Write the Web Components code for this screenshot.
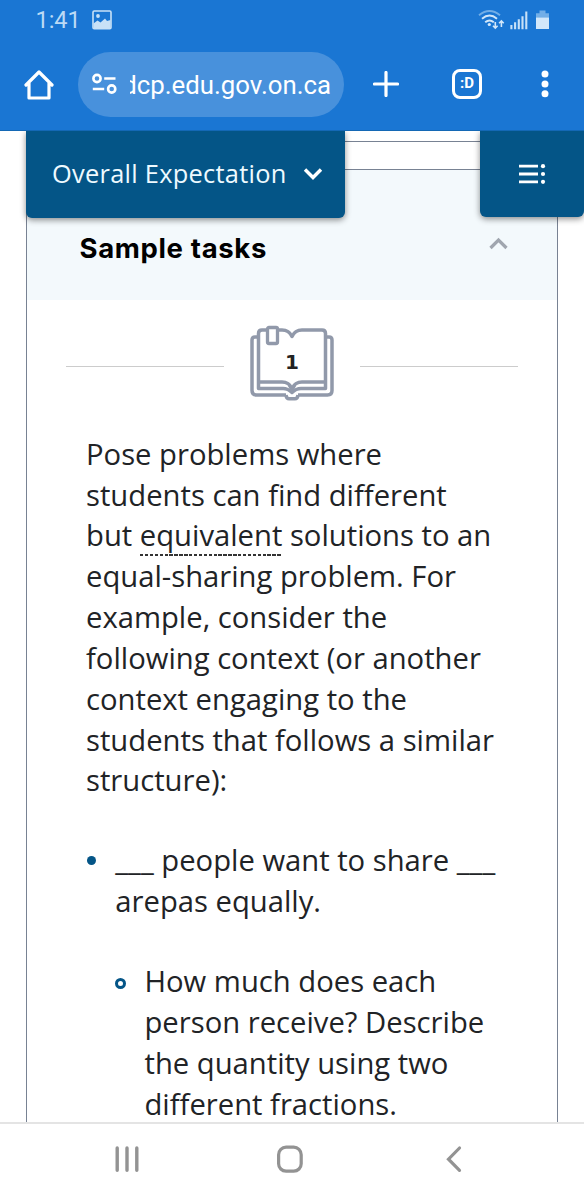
<!DOCTYPE html>
<html lang="en">
<head>
<meta charset="utf-8">
<title>Sample tasks</title>
<style>
html,body{margin:0;height:1200px;overflow:hidden;background:#fff}
body{font-family:"Open Sans","Noto Sans",sans-serif}
</style>
</head>
<body>
<phone-screen>
  <status-bar slot="top">1:41</status-bar>
  <browser-bar slot="top">dcp.edu.gov.on.ca</browser-bar>
  <page-tabs slot="page">Overall Expectation</page-tabs>
  <task-card slot="page">
    <span slot="title">Sample tasks</span>
    <book-divider>1</book-divider>
    <task-copy></task-copy>
  </task-card>
  <nav-bar slot="bottom"></nav-bar>
</phone-screen>
<script>
const define = (name, html) => customElements.define(name, class extends HTMLElement {
  constructor() {
    super();
    const t = document.createElement('template');
    t.innerHTML = html;
    this.attachShadow({mode: 'open'}).appendChild(t.content.cloneNode(true));
  }
});

define('phone-screen', `
<style>
:host{display:flex;flex-direction:column;width:584px;height:1200px;overflow:hidden;background:#fff}
header{height:131px;flex:none;background:#1a76d3;box-shadow:inset 0 -1px #1468b5}
main{height:991px;flex:none;overflow:hidden;position:relative;background:#fff}
</style>
<header><slot name="top"></slot></header>
<main><slot name="page"></slot></main>
<slot name="bottom"></slot>`);

define('status-bar', `
<style>
:host{display:flex;align-items:center;height:40px;box-sizing:border-box;padding:0 34px 0 35.5px;color:#bcdaf5;font:23.6px/40px Roboto,sans-serif;letter-spacing:-.1px}
svg{display:block;flex:none}
.pic{margin-left:11px}
.r{margin-left:auto;display:flex}
</style>
<slot></slot>
<svg class="pic" width="20" height="20" viewBox="0 0 20 20"><rect x="1" y="1" width="18" height="17.6" rx="1.2" fill="none" stroke="#c8e1f7" stroke-width="1.6"/><path d="M1.5 13.5 5.5 10.5 8.5 12.5 13 8.5 15 11 18.5 10V18H1.5Z" fill="#c8e1f7"/><circle cx="6" cy="6" r="1.9" fill="#c8e1f7"/></svg>
<div class="r"><svg width="72" height="20" viewBox="0 0 72 20">
<g fill="none" stroke-width="1.9"><path d="M1 5.2Q11.5-3.2 22 5.2" stroke="#72aee7"/><path d="M4 8.8Q11.5 2.4 19 8.8M7.2 12.3Q11.5 8.6 15.8 12.3" stroke="#d2e7fa"/></g>
<circle cx="11.3" cy="14.5" r="1.6" fill="#d2e7fa"/>
<path d="M17.3 12V18M15 15.8 17.3 18.2 19.6 15.8M23.4 17V11M21.1 13.2 23.4 10.8 25.7 13.2" fill="none" stroke="#d2e7fa" stroke-width="1.6"/>
<path d="M33.4 15V19.3M37.1 12.3V19.3M40.8 9.3V19.3M44.5 6.3V19.3M48.3 1.5V19.3" stroke="#c8e1f7" stroke-width="2.1"/>
<path d="M58 3.2H61.5V.6H67.5V3.2H71V8H58Z" fill="#72aee7"/><path d="M58 7.6H71V19H58Z" fill="#d2e7fa"/></svg></div>`);

define('browser-bar', `
<style>
:host{display:flex;align-items:center;height:65px;padding:12px 33px 0 24px;color:#fff}
svg{display:block;flex:none}
.pill{display:flex;align-items:center;box-sizing:border-box;width:266px;height:65px;margin-left:24px;padding:1px 13px 0 14px;border-radius:33px;background:#4891dc}
.pill svg{margin-top:-1.5px}
.url{margin-left:13px;width:201px;overflow:hidden;display:flex;justify-content:flex-end;font:25.8px/36px Roboto,sans-serif;white-space:nowrap}
.plus{margin-left:29px}.tab{margin-left:53px;width:24px;height:24px;border:3px solid #fff;border-radius:8px;font:bold 15px/23px Roboto,sans-serif;text-align:center}
.plus,.tab,.dots{position:relative;top:-.5px}
.dots{margin-left:59px}
</style>
<svg width="30" height="30" viewBox="0 0 30 30"><path d="M2 15 15 2 28 15M5 13V28H25V13" fill="none" stroke="#fff" stroke-width="3.2" stroke-linejoin="round" stroke-linecap="round"/></svg>
<div class="pill"><svg width="25" height="22" viewBox="0 0 25 22"><g fill="none" stroke="#fff" stroke-width="2.6"><circle cx="5" cy="5.5" r="3.6"/><circle cx="19.7" cy="16" r="3.6"/><path d="M12.2 5.5H23.5M.8 16H12.2"/></g></svg><span class="url"><slot></slot></span></div>
<svg class="plus" width="26" height="26" viewBox="0 0 26 26"><path d="M13 1.5V24.5M1.5 13H24.5" stroke="#fff" stroke-width="3.2" stroke-linecap="round"/></svg>
<div class="tab">:D</div>
<svg class="dots" width="8" height="28" viewBox="0 0 8 28"><g fill="#fff"><circle cx="4" cy="4" r="3.5"/><circle cx="4" cy="14" r="3.5"/><circle cx="4" cy="23.8" r="3.5"/></g></svg>`);

define('page-tabs', `
<style>
:host{position:absolute;z-index:2;left:26px;right:0;top:0;display:flex;justify-content:space-between;align-items:flex-start}
div{display:flex;align-items:center;box-sizing:border-box;height:86.5px;background:#045587;border-radius:0 0 6px 6px;box-shadow:0 2px 6px rgba(0,0,0,.45);color:#eefaff;white-space:nowrap}
.a{width:319px;padding:0 0 2.5px 26px;font-size:25.4px;line-height:36px;letter-spacing:.27px}
.b{width:104px;height:86px;padding-left:39px}
.a svg{margin:1px 0 0 16px}
</style>
<div class="a"><slot></slot><svg width="20" height="14" viewBox="0 0 20 14"><path d="M2 2.5 10 10.5 18 2.5" fill="none" stroke="#fff" stroke-width="3.4"/></svg></div>
<div class="b"><svg width="27" height="20" viewBox="0 0 27 20"><path d="M0 2.2H19M0 10H19M0 17.8H19" stroke="#fff" stroke-width="2.8"/><g fill="#fff"><circle cx="24" cy="2.2" r="2.1"/><circle cx="24" cy="10" r="2.1"/><circle cx="24" cy="17.8" r="2.1"/></g></svg></div>`);

define('task-card', `
<style>
:host{display:block;margin-left:26px;width:532px}
.prev{box-sizing:border-box;height:11px;border:1px solid #788293;border-top:0}
.card{box-sizing:border-box;margin-top:27px;height:1000px;border:1px solid #788293}
.head{display:flex;justify-content:space-between;height:130px;box-sizing:border-box;padding:60px 49px 0 52.5px;background:#f3f9fc;color:#000;font:700 27.5px/36px Inter,sans-serif;letter-spacing:.65px}
svg{margin-top:7px}
</style>
<div class="prev"></div>
<div class="card"><div class="head"><slot name="title"></slot><svg width="19" height="13" viewBox="0 0 19 13"><path d="M1.5 11 9.5 3 17.5 11" fill="none" stroke="#a0a6af" stroke-width="3.2"/></svg></div><slot></slot></div>`);

define('book-divider', `
<style>
:host{display:flex;align-items:center;height:77px;margin:25px 39px 0;color:#222;font:bold 20px "DejaVu Sans",sans-serif}
i{height:1px;flex:1;background:#ccc;margin-top:5px}
.book{display:grid;width:86px;margin:0 25px;place-items:center}
.book>*{grid-area:1/1}
svg{display:block}
.n{line-height:28px;margin-top:-3px}
</style>
<i></i><div class="book"><svg width="86" height="77" viewBox="0 0 86 77"><g fill="none" stroke="#9199aa" stroke-width="3.5" stroke-linejoin="round">
<path d="M9 12H6Q3 12 3 15V65.5Q3 70 7.5 70H37M49 70H78.5Q83 70 83 65.5V15Q83 12 80 12H77"/>
<path d="M37 70Q37.5 73.8 40 73.8H46Q48.5 73.8 49 70"/>
<path d="M18 5H13Q9.5 5 9.5 8.5V63.5H34Q39 63.5 43 67.5Q47 63.5 52 63.5H76.5V8.5Q76.5 5 73 5H53Q46 5 43 11.5Q40 5 33 5H29"/>
<path d="M9 57H33Q40 57 43 63.5Q46 57 53 57H77"/>
<rect x="18.5" y="2.5" width="10" height="16" rx="1.5" fill="#fff" stroke-width="3.3"/></g><path d="M39 61H47L43 69Z" fill="#9199aa"/></svg><span class="n"><slot></slot></span></div><i></i>`);

define('task-copy', `
<style>
:host{display:block;padding:31.8px 0 0 59px;color:#212326;font-size:29.22px;line-height:40.83px;white-space:nowrap}
p,ul{margin:0;padding:0}
li{display:block;position:relative}
u{text-decoration:none;background:repeating-linear-gradient(90deg,#333 0 3.4px,transparent 3.4px 4.9px) 0 100%/100% 2px no-repeat;padding-bottom:1px}
.l1{margin-top:39.2px;padding-left:29.3px}
.l2{margin-top:39.2px}
.l2 li{padding-left:29.2px}
li::before{content:"";position:absolute;left:.5px;top:16px;width:9px;height:9px;border-radius:50%;background:#045587}
.l2 li::before{box-sizing:border-box;left:0;top:17px;width:11px;height:11px;background:#fff;border:3px solid #045587}
</style>
<p>Pose problems where<br>students can find different<br>but <u>equivalent</u> solutions to an<br>equal-sharing problem. For<br>example, consider the<br>following context (or another<br>context engaging to the<br>students that follows a similar<br>structure):</p>
<ul><li class="l1">___ people want to share ___<br>arepas equally.<ul class="l2"><li>How much does each<br>person receive? Describe<br>the quantity using two<br>different fractions.</li></ul></li></ul>`);

define('nav-bar', `
<style>
:host{display:flex;align-items:center;box-sizing:border-box;height:78px;flex:none;border-top:2px solid #e4e4e4;background:#fff;padding:0 0 6px 115px}
svg{display:block}
.h{margin-left:136px}.k{margin-left:142px}
</style>
<svg width="25" height="30" viewBox="0 0 25 30"><path d="M2.2 4V26.2M12 4V26.2M21.8 4V26.2" stroke="#939393" stroke-width="3.4" stroke-linecap="round"/></svg>
<svg class="h" width="28" height="30" viewBox="0 0 28 30"><rect x="2.6" y="3.2" width="22.6" height="24" rx="7.5" fill="none" stroke="#939393" stroke-width="3.2"/></svg>
<svg class="k" width="16" height="30" viewBox="0 0 16 30"><path d="M13.5 4 2.5 15.2 13.5 26.4" fill="none" stroke="#939393" stroke-width="3.2" stroke-linecap="round"/></svg>`);
</script>
</body>
</html>
